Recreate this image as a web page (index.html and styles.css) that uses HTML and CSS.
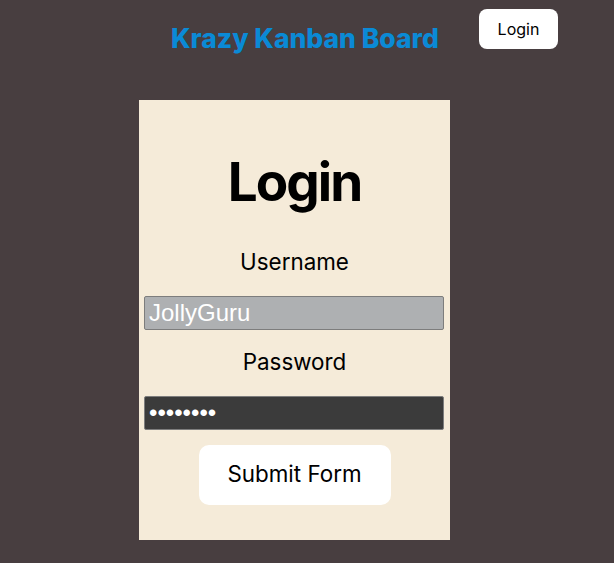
FILE: index.html
```html
<!DOCTYPE html>
<html lang="en">
<head>
<meta charset="utf-8">
<title>Krazy Kanban Board</title>
<link rel="stylesheet" href="styles.css">
</head>
<body>
<header class="nav">
  <h2 class="brand">Krazy Kanban Board</h2>
  <button class="nav-btn" type="button">Login</button>
</header>
<main class="main">
  <form class="card">
    <h1 class="card-title">Login</h1>
    <label class="field-label first" for="username">Username</label>
    <input class="field user" id="username" type="text" value="JollyGuru">
    <label class="field-label" for="password">Password</label>
    <input class="field pass" id="password" type="password" value="password">
    <button class="submit" type="button">Submit Form</button>
  </form>
</main>
</body>
</html>
```

FILE: styles.css
```css
html, body {
  margin: 0;
  padding: 0;
}
body {
  background: #483e40;
  font-family: Inter, "Noto Sans", sans-serif;
  color: #000;
  min-height: 563px;
}
.nav {
  display: flex;
  align-items: flex-start;
  justify-content: space-between;
  padding: 9px 56px 0 171px;
  height: 100px;
  box-sizing: border-box;
}
.brand {
  margin: 10px 0 0;
  font-size: 26.5px;
  font-weight: 800;
  color: #0a8ad6;
  line-height: 38px;
  white-space: nowrap;
}
.nav-btn {
  width: 79px;
  height: 40px;
  border: none;
  border-radius: 8px;
  background: #fff;
  font-family: Inter, sans-serif;
  font-size: 16px;
  color: #000;
  padding: 0;
}
.main {
  padding-left: 139px;
}
.card {
  width: 311px;
  height: 440px;
  box-sizing: border-box;
  background: #f5ebd9;
  display: flex;
  flex-direction: column;
  align-items: center;
  padding: 50px 0 0;
}
.card-title {
  margin: 0;
  font-size: 53px;
  font-weight: 700;
  line-height: 64px;
  letter-spacing: -2px;
}
.field-label {
  font-size: 22.4px;
  line-height: 28px;
  margin-top: 18px;
}
.field-label.first {
  margin-top: 34px;
}
.field {
  align-self: flex-start;
  margin: 20px 0 0 5px;
  width: 300px;
  height: 34px;
  box-sizing: border-box;
  border: 1px solid #7d7d7d;
  border-radius: 2px;
  font-family: "Liberation Sans", Arial, sans-serif;
  font-size: 24px;
  color: #fff;
  padding: 0 4px;
}
.user {
  background: #aeb0b2;
}
.pass {
  background: #3b3b3b;
}
.submit {
  margin-top: 15px;
  width: 192px;
  height: 60px;
  border: none;
  border-radius: 10px;
  background: #fff;
  font-family: Inter, sans-serif;
  font-size: 22.4px;
  color: #000;
  padding: 0 0 3px;
}
```
